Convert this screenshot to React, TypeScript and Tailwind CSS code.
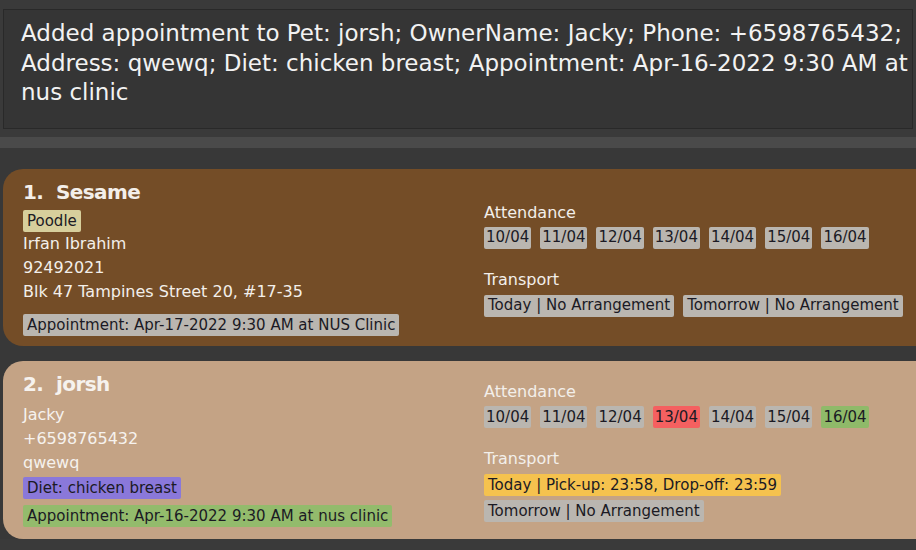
import React from 'react';

type Tag = { text: string; cls: string };

const GRAY = 'bg-[#bab6b0]';

function Chip({ text, cls, tight }: Tag & { tight?: boolean }) {
  return (
    <span
      className={`inline-flex h-[22px] shrink-0 items-center whitespace-nowrap rounded-[2px] text-[15px] text-[#1b1a24] ${
        tight ? 'px-[2px]' : 'px-[4px]'
      } ${cls}`}
    >
      {text}
    </span>
  );
}

const days = ['10/04', '11/04', '12/04', '13/04', '14/04', '15/04', '16/04'];

function RightPanel({ dayCls, transport }: { dayCls: Record<string, string>; transport: Tag[] }) {
  return (
    <div className="flex w-[450px] shrink-0 flex-col pt-[4px] text-[#f3efea]">
      <div className="h-[20px] text-[16px] leading-[20px]">Attendance</div>
      <div className="mt-[4px] flex gap-[9px]">
        {days.map((d) => (
          <Chip key={d} text={d} cls={dayCls[d] ?? GRAY} tight />
        ))}
      </div>
      <div className="mt-[21px] h-[20px] text-[16px] leading-[20px]">Transport</div>
      <div className="mt-[5px] flex flex-wrap gap-x-[9px] gap-y-[4px]">
        {transport.map((t) => (
          <Chip key={t.text} {...t} />
        ))}
      </div>
    </div>
  );
}

export default function App() {
  return (
    <div className="h-[550px] w-[916px] overflow-hidden bg-[#3a3a3a] font-['DejaVu_Sans',sans-serif]">
      <div className="px-[3px] pt-[9px]">
        <div className="h-[120px] border border-[#292929] bg-[#353535] pl-[17px] pt-[9px] text-[23px] leading-[29.5px] text-[#f2f2f2]">
          Added appointment to Pet: jorsh; OwnerName: Jacky; Phone: +6598765432; Address: qwewq; Diet: chicken
          breast; Appointment: Apr-16-2022 9:30 AM at nus clinic
        </div>
      </div>
      <div className="mt-[8px] h-[11px] bg-[#4a4a4a]" />

      <div className="flex bg-[#383838]">
        <div className="flex flex-1 flex-col gap-[15px] pl-[3px] pt-[21px]">
          {/* card 1 */}
          <div className="flex h-[177px] overflow-hidden rounded-l-[20px] bg-[#744d27] text-[#f3efea]">
            <div className="flex w-[481px] shrink-0 flex-col pl-[20px] pt-[9px]">
              <div className="h-[28px] whitespace-pre text-[20px] font-bold leading-[28px] tracking-[-0.6px]">
                1.  Sesame
              </div>
              <div className="mt-[4px] flex">
                <Chip text="Poodle" cls="bg-[#d7cf9c]" />
              </div>
              <div className="text-[16px] leading-[24px]">
                <div>Irfan Ibrahim</div>
                <div>92492021</div>
                <div>Blk 47 Tampines Street 20, #17-35</div>
              </div>
              <div className="mt-[10px] flex">
                <Chip text="Appointment: Apr-17-2022 9:30 AM at NUS Clinic" cls={GRAY} />
              </div>
            </div>
            <div className="flex items-center">
              <RightPanel
                dayCls={{}}
                transport={[
                  { text: 'Today | No Arrangement', cls: GRAY },
                  { text: 'Tomorrow | No Arrangement', cls: GRAY },
                ]}
              />
            </div>
          </div>

          {/* card 2 */}
          <div className="flex h-[178px] overflow-hidden rounded-l-[20px] bg-[#c4a385] text-[#f6f2ee]">
            <div className="flex w-[481px] shrink-0 flex-col pl-[20px] pt-[9px]">
              <div className="h-[28px] whitespace-pre text-[20px] font-bold leading-[28px] tracking-[-0.6px]">
                2.  jorsh
              </div>
              <div className="mt-[5px] text-[16px] leading-[24px]">
                <div>Jacky</div>
                <div>+6598765432</div>
                <div>qwewq</div>
              </div>
              <div className="mt-[2px] flex">
                <Chip text="Diet: chicken breast" cls="bg-[#8a78da]" />
              </div>
              <div className="mt-[6px] flex">
                <Chip text="Appointment: Apr-16-2022 9:30 AM at nus clinic" cls="bg-[#93bb6c]" />
              </div>
            </div>
            <div className="flex items-center">
              <RightPanel
                dayCls={{ '13/04': 'bg-[#f56060]', '16/04': 'bg-[#8fba69]' }}
                transport={[
                  { text: 'Today | Pick-up: 23:58, Drop-off: 23:59', cls: 'bg-[#f5c24e]' },
                  { text: 'Tomorrow | No Arrangement', cls: GRAY },
                ]}
              />
            </div>
          </div>
        </div>

        {/* scrollbar */}
        <div className="w-[7px] shrink-0 pl-[4px] pt-[21px]">
          <div className="h-[293px] w-[3px] bg-[#5c5c5c]" />
        </div>
      </div>
    </div>
  );
}
